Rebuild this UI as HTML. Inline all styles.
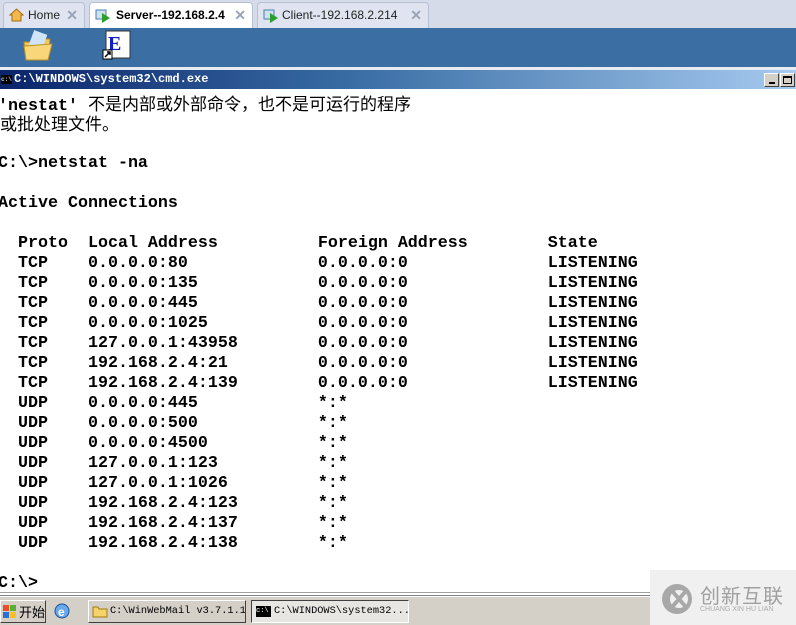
<!DOCTYPE html>
<html><head><meta charset="utf-8"><style>
*{margin:0;padding:0;box-sizing:border-box}
body{width:796px;height:625px;overflow:hidden;background:#fff;position:relative;font-family:"Liberation Sans","Noto Sans CJK SC",sans-serif}
.tabs{position:absolute;left:0;top:0;width:796px;height:28px;background:#d6dbe9}
.tab{position:absolute;top:2px;height:26px;border:1px solid #b8c0d4;border-bottom:none;border-radius:4px 4px 0 0;background:#dfe4f0;font-size:12px;line-height:24px;color:#222}
.tab.act{background:#fff;font-weight:bold;color:#000}
.x{position:absolute;right:6px;top:0;color:#9aa3b5;font-weight:bold;font-size:14px}
.desk{position:absolute;left:0;top:28px;width:796px;height:39px;background:#3b6ea3}
.wl{position:absolute;left:0;top:67px;width:796px;height:3px;background:#e8ecf2}
.title{position:absolute;left:0;top:70px;width:796px;height:19px;background:linear-gradient(90deg,#0a246a 0%,#3a6ea5 45%,#a6caf0 100%);color:#fff;font:bold 12px "Liberation Mono",monospace;line-height:19px;padding-left:14px}
.btn{position:absolute;top:73px;width:15px;height:14px;background:#d4d0c8;border:1px solid;border-color:#fff #404040 #404040 #fff}
.con{position:absolute;left:-2px;top:194px;font:bold 16.67px/20px "Liberation Mono",monospace;color:#000;white-space:pre}
.ln{position:absolute;left:0;height:20px;line-height:20px;white-space:pre;font:bold 16.67px/20px "Liberation Mono",monospace;color:#000}
.cjk{font-family:"Noto Sans CJK SC",sans-serif;font-weight:normal;font-size:17px;line-height:20px}
.sep{position:absolute;left:0;top:592px;width:796px;height:4px;background:#fff;border-top:1px solid #a0a0a0;border-bottom:1px solid #808080}
.task{position:absolute;left:0;top:597px;width:796px;height:28px;background:#d4d0c8}
.tb{position:absolute;top:3px;height:23px;border:1px solid;border-color:#fff #404040 #404040 #fff;font:10.3px "Liberation Mono","Noto Sans CJK SC",monospace;line-height:21px;white-space:nowrap;overflow:hidden}
.wm{position:absolute;left:650px;top:570px;width:146px;height:55px;background:#f0f0f0;color:#999}
</style></head><body>
<div class="tabs">
 <div class="tab" style="left:3px;width:82px;padding-left:24px">Home<span class="x">✕</span>
  <svg style="position:absolute;left:5px;top:5px" width="15" height="14"><path d="M1 7 L7.5 1 L14 7 L12 7 L12 13 L3 13 L3 7Z" fill="#f2b84b" stroke="#a86a10"/></svg></div>
 <div class="tab act" style="left:89px;width:164px;padding-left:26px">Server--192.168.2.4<span class="x">✕</span>
  <svg style="position:absolute;left:5px;top:5px" width="16" height="15"><rect x="1" y="2" width="10" height="9" fill="#cfe0f0" stroke="#4a7fb0"/><path d="M7 5 L15 10 L7 15Z" fill="#2aa02a"/></svg></div>
 <div class="tab" style="left:257px;width:172px;padding-left:24px">Client--192.168.2.214<span class="x">✕</span>
  <svg style="position:absolute;left:5px;top:5px" width="16" height="15"><rect x="1" y="2" width="10" height="9" fill="#cfe0f0" stroke="#4a7fb0"/><path d="M7 5 L15 10 L7 15Z" fill="#2aa02a"/></svg></div>
</div>
<div class="desk">
 <svg style="position:absolute;left:22px;top:2px" width="32" height="32"><path d="M2 12 L12 12 L14 9 L28 9 L26 30 L4 30Z" fill="#f3c75a" stroke="#b88a20"/><rect x="9" y="2" width="14" height="16" fill="#cfe5f7" transform="rotate(20 16 10)"/><path d="M2 16 L30 14 L26 30 L4 30Z" fill="#f7d77a" stroke="#c09020"/></svg>
 <svg style="position:absolute;left:102px;top:2px" width="30" height="32"><rect x="4" y="1" width="24" height="27" fill="#fff" stroke="#333"/><text x="6" y="20" font-family="Liberation Serif" font-weight="bold" font-size="20" fill="#1020c0">E</text><rect x="1" y="20" width="9" height="9" fill="#fff" stroke="#000"/><path d="M3 27 L8 22 M5 22 L8 22 L8 25" stroke="#000" stroke-width="1.5" fill="none"/></svg>
</div>
<div class="wl"></div>
<div class="title"><span style="position:absolute;left:1px;top:5px;width:11px;height:9px;background:#000;font-size:6px;line-height:9px;color:#ccc">c:\</span>C:\WINDOWS\system32\cmd.exe</div>
<div class="btn" style="left:764px"><span style="position:absolute;left:4px;top:8px;width:6px;height:2px;background:#000"></span></div>
<div class="btn" style="left:780px"><span style="position:absolute;left:2px;top:2px;width:9px;height:8px;border:1px solid #000;border-top-width:2px"></span></div>
<div class="ln" style="top:93px;left:-2px">'nestat' <span class="cjk">不是内部或外部命令，也不是可运行的程序</span></div>
<div class="ln" style="top:113px"><span class="cjk">或批处理文件。</span></div>
<div class="ln" style="top:154px;left:-2px">C:\>netstat -na</div>
<div class="con">Active Connections

  Proto  Local Address          Foreign Address        State
  TCP    0.0.0.0:80             0.0.0.0:0              LISTENING
  TCP    0.0.0.0:135            0.0.0.0:0              LISTENING
  TCP    0.0.0.0:445            0.0.0.0:0              LISTENING
  TCP    0.0.0.0:1025           0.0.0.0:0              LISTENING
  TCP    127.0.0.1:43958        0.0.0.0:0              LISTENING
  TCP    192.168.2.4:21         0.0.0.0:0              LISTENING
  TCP    192.168.2.4:139        0.0.0.0:0              LISTENING
  UDP    0.0.0.0:445            *:*
  UDP    0.0.0.0:500            *:*
  UDP    0.0.0.0:4500           *:*
  UDP    127.0.0.1:123          *:*
  UDP    127.0.0.1:1026         *:*
  UDP    192.168.2.4:123        *:*
  UDP    192.168.2.4:137        *:*
  UDP    192.168.2.4:138        *:*

C:\></div>
<div class="sep"></div>
<div class="task">
 <div class="tb" style="left:0;width:46px;padding-left:18px;font-family:'Noto Sans CJK SC',sans-serif;font-size:13px">开始
  <svg style="position:absolute;left:2px;top:4px" width="14" height="14"><rect x="0" y="0" width="6" height="6" fill="#e8502a"/><rect x="7" y="0" width="6" height="6" fill="#5ab030"/><rect x="0" y="7" width="6" height="6" fill="#2a70d8"/><rect x="7" y="7" width="6" height="6" fill="#f8c020"/></svg></div>
 <svg style="position:absolute;left:54px;top:6px" width="16" height="16"><circle cx="8" cy="8" r="7" fill="#6aa8e8" stroke="#1a4fa0"/><text x="4" y="13" font-size="12" font-weight="bold" fill="#fff" font-family="Liberation Sans">e</text></svg>
 <div class="tb" style="left:88px;width:158px;padding-left:21px">C:\WinWebMail v3.7.1.1
  <svg style="position:absolute;left:3px;top:4px" width="16" height="13"><path d="M1 2 L6 2 L7 4 L15 4 L15 12 L1 12Z" fill="#f3d36a" stroke="#a07a10"/></svg></div>
 <div class="tb" style="left:251px;width:158px;padding-left:22px;border-color:#404040 #fff #fff #404040;background:#e8e6e2">C:\WINDOWS\system32...
  <span style="position:absolute;left:4px;top:5px;width:15px;height:11px;background:#000;color:#fff;font-size:7px;line-height:11px">c:\</span></div>
</div>
<div class="wm">
 <svg style="position:absolute;left:10px;top:12px" width="34" height="34"><circle cx="17" cy="17" r="15" fill="#a8a8a8"/><circle cx="19" cy="17" r="9" fill="#f0f0f0"/><path d="M13 10 L25 24 M25 10 L13 24" stroke="#a8a8a8" stroke-width="4"/></svg>
 <div style="position:absolute;left:50px;top:10px;font:20px 'Noto Sans CJK SC',sans-serif;color:#a0a0a0;letter-spacing:1px">创新互联</div>
 <div style="position:absolute;left:50px;top:36px;font:7px 'Liberation Sans',sans-serif;color:#aaa">CHUANG XIN HU LIAN</div>
</div>
</body></html>
